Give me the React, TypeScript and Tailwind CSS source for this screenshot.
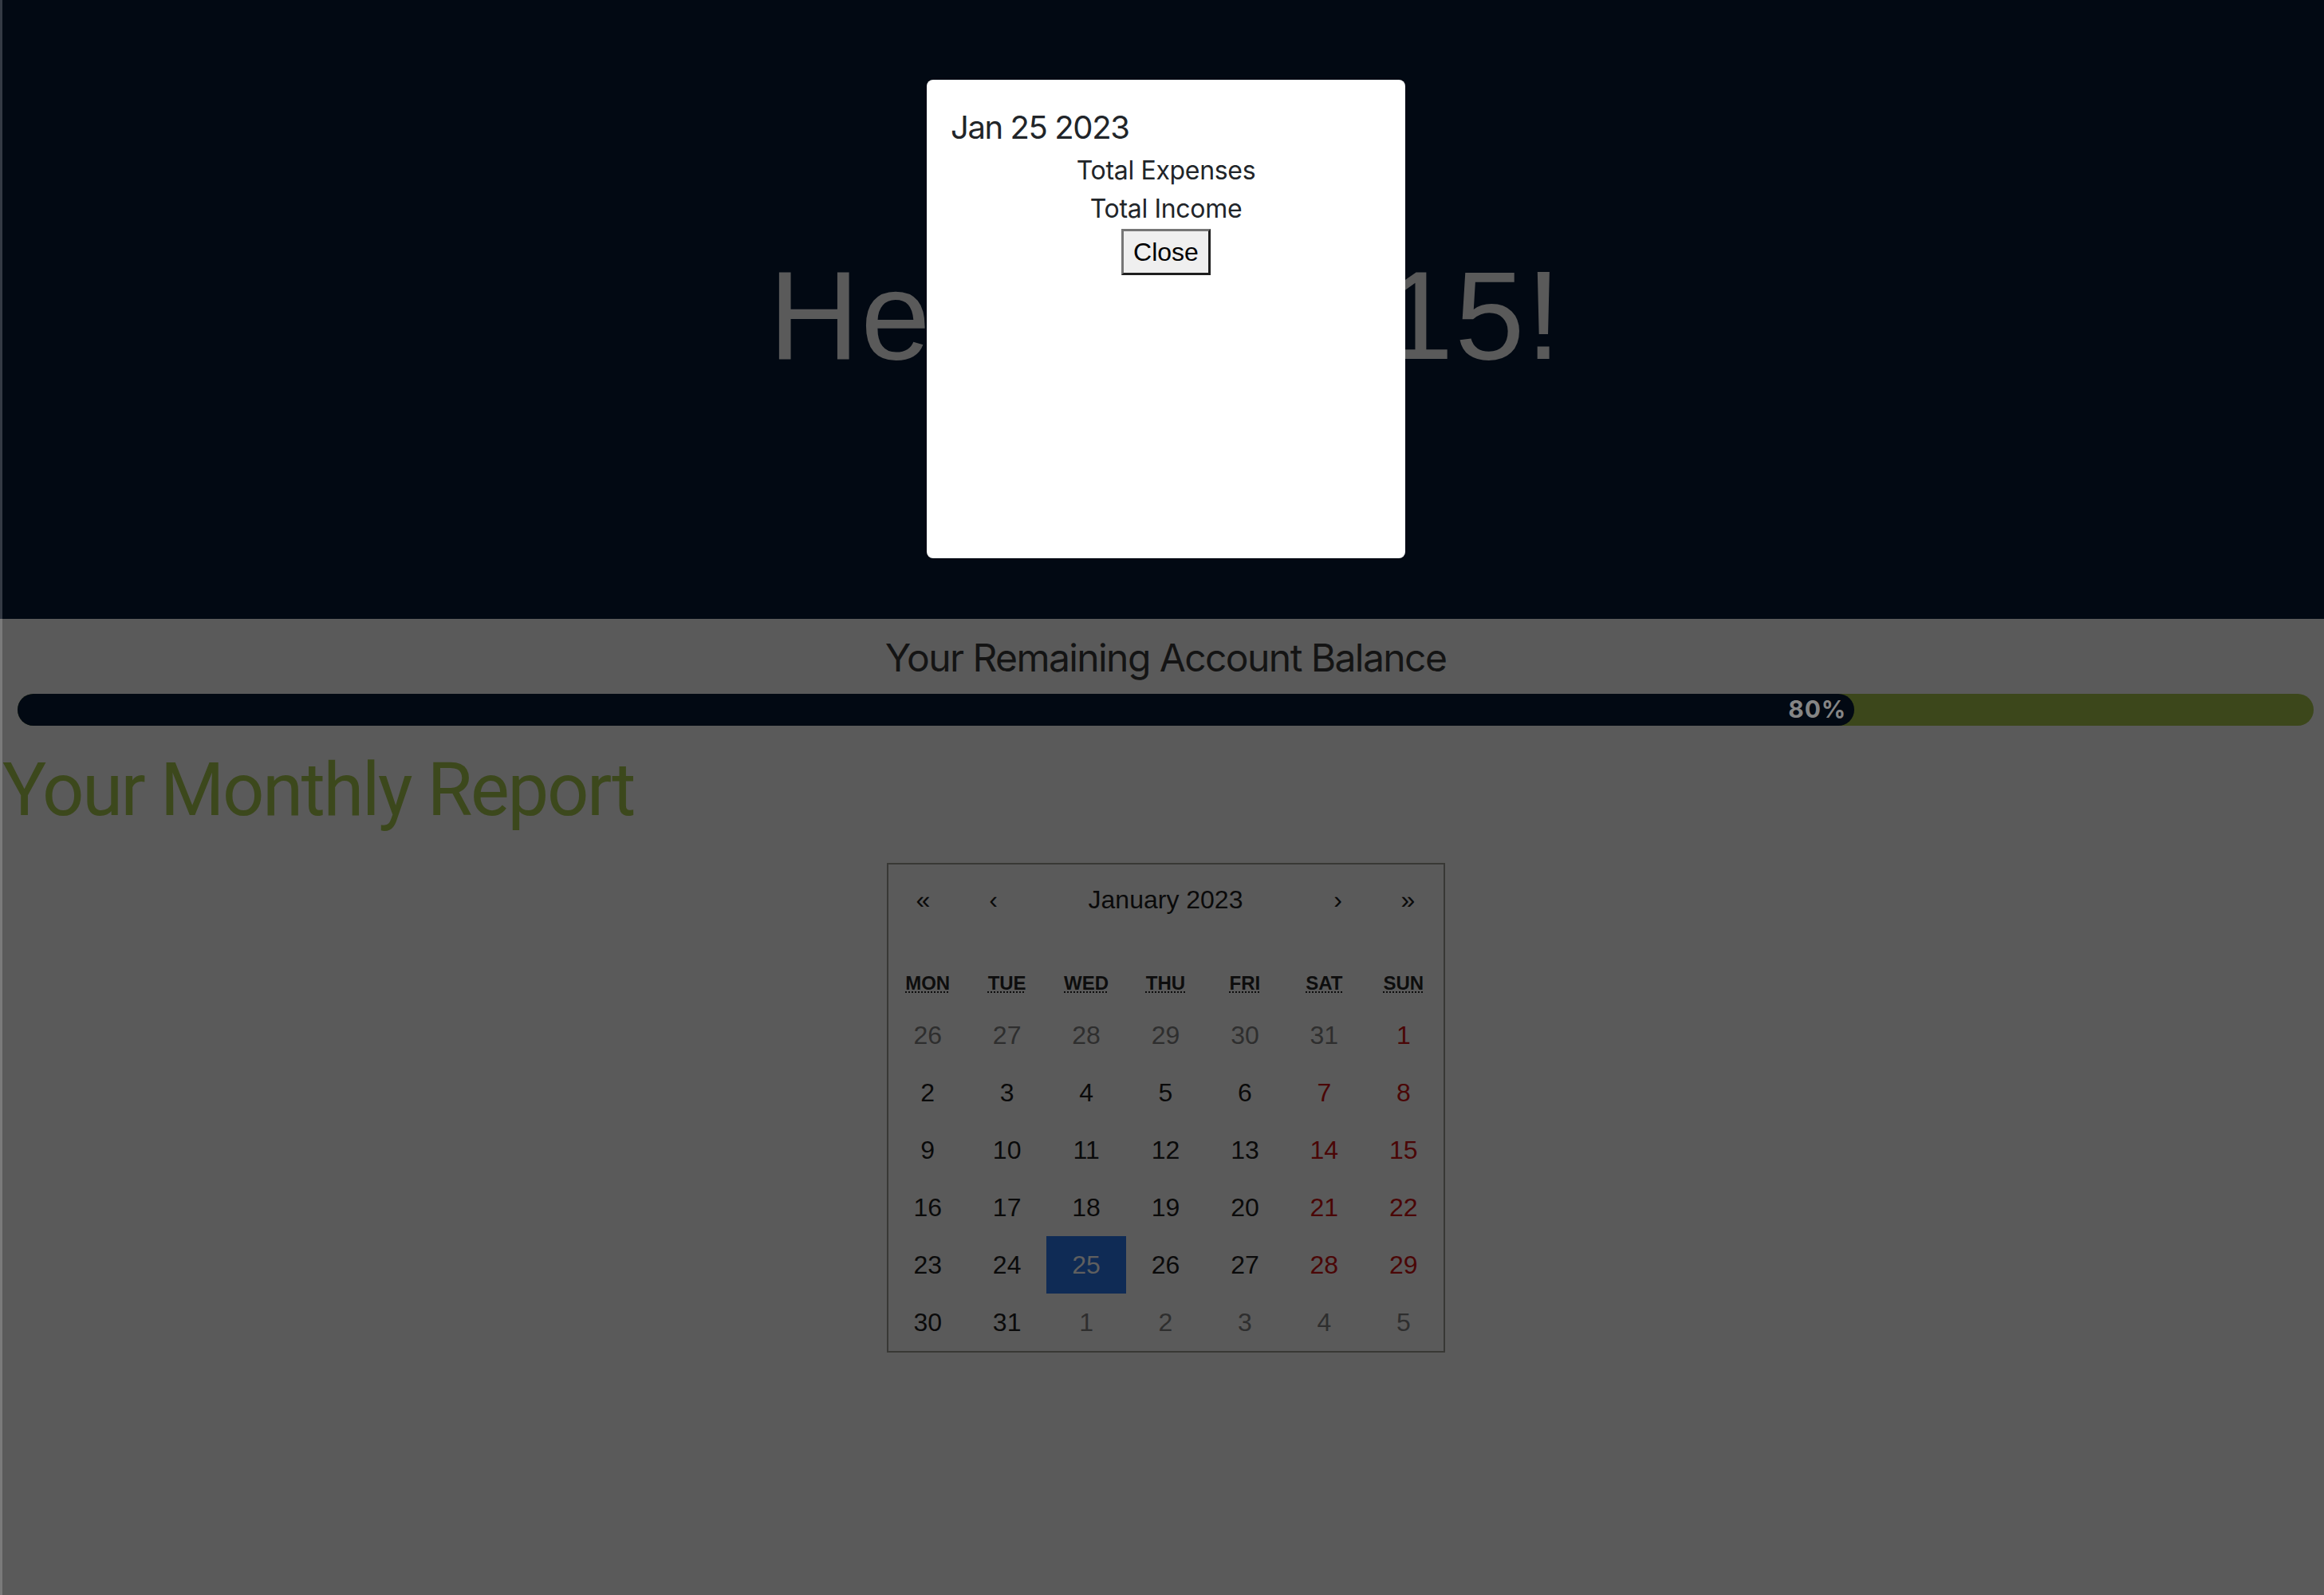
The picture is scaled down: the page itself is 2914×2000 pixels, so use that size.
import React from "react";

const weekdays = ["Mon", "Tue", "Wed", "Thu", "Fri", "Sat", "Sun"];

const weeks: number[][] = [
  [26, 27, 28, 29, 30, 31, 1],
  [2, 3, 4, 5, 6, 7, 8],
  [9, 10, 11, 12, 13, 14, 15],
  [16, 17, 18, 19, 20, 21, 22],
  [23, 24, 25, 26, 27, 28, 29],
  [30, 31, 1, 2, 3, 4, 5],
];

function isOtherMonth(row: number, day: number) {
  return (row === 0 && day > 20) || (row === 5 && day < 10);
}

function Calendar() {
  return (
    <div className="mx-auto mt-[36px] w-[700px] border-2 border-[#383835] font-['Liberation_Sans',Arial,sans-serif] text-[#0a0a0a]">
      {/* navigation */}
      <div className="mb-[32px] flex h-[88px]">
        <button className="min-w-[88px] text-[32px]">«</button>
        <button className="min-w-[88px] text-[32px]">‹</button>
        <button className="flex-1 text-[32px]">January 2023</button>
        <button className="min-w-[88px] text-[32px]">›</button>
        <button className="min-w-[88px] text-[32px]">»</button>
      </div>

      {/* weekdays */}
      <div className="grid grid-cols-7">
        {weekdays.map((d) => (
          <div
            key={d}
            className="p-[12px] text-center text-[24px] font-bold uppercase leading-[34px] text-[#0d0d0d]"
          >
            <abbr title={d} className="underline decoration-dotted decoration-[2px] underline-offset-[3px]">
              {d}
            </abbr>
          </div>
        ))}
      </div>

      {/* days */}
      <div className="grid grid-cols-7">
        {weeks.map((week, r) =>
          week.map((day, c) => {
            const other = isOtherMonth(r, day);
            const active = !other && day === 25;
            let color = "text-[#0a0a0a]";
            if (other) color = "text-[#2e2e2e]";
            else if (c >= 5) color = "text-[#4a0606]";
            if (active) color = "text-[#5f5f5f] bg-[#0f2b55]";
            return (
              <div
                key={`${r}-${c}`}
                className={`flex h-[72px] items-center justify-center text-[32px] ${color}`}
              >
                {day}
              </div>
            );
          })
        )}
      </div>
    </div>
  );
}

export default function App() {
  return (
    <div className="relative flex min-h-[2000px] w-full overflow-hidden bg-[#5a5a5a]">
      <div className="flex w-[2920px] shrink-0 flex-col">
        {/* header */}
        <div className="flex h-[776px] items-center justify-center border-l-[3px] border-[#343a44] bg-[#020913] pt-[14px]">
          <h1 className="font-['Liberation_Sans',Arial,sans-serif] text-[157px] leading-none tracking-[0.012em] text-[#5a5a5a]">
            Hello, user15!
          </h1>
        </div>

        {/* body */}
        <div className="flex flex-1 flex-col border-l-[3px] border-[#7a7a7a] pt-[20px]">
          <h4 className="mb-[16px] text-center font-['Inter',sans-serif] text-[48px] leading-[57.6px] tracking-[-0.033em] text-[#141414]">
            Your Remaining Account Balance
          </h4>

          <div className="mx-[19px] flex h-[40px] rounded-full bg-[#3c471b]">
            <div className="flex w-[80%] items-center justify-end rounded-full bg-[#020913] pr-[10px] font-['Inter',sans-serif] text-[30px] font-bold tracking-[0.03em] text-[#858585]">
              80%
            </div>
          </div>

          <h2 className="mt-[26px] font-['Roboto',sans-serif] text-[92px] leading-[1.2] tracking-[-0.025em] text-[#3c481c]">
            Your Monthly Report
          </h2>

          <Calendar />
        </div>
      </div>

      {/* date modal */}
      <div className="absolute left-[1162px] top-[100px] flex h-[600px] w-[600px] flex-col rounded-lg bg-white px-[30px] pt-[36px] font-['Inter',sans-serif] tracking-[-0.02em] text-[#212529]">
        <h5 className="text-[40px] leading-[48px] tracking-[-0.035em]">Jan 25 2023</h5>
        <div className="mt-[6px] flex flex-col items-center text-[32px] leading-[48px]">
          <p>Total Expenses</p>
          <p>Total Income</p>
          <button className="mt-[1px] h-[58px] border-[3px] border-b-[#1f1f1f] border-l-[#767676] border-r-[#1f1f1f] border-t-[#767676] bg-[#efefef] px-[12px] font-['Liberation_Sans',Arial,sans-serif] text-[32px] leading-none tracking-normal text-black">
            Close
          </button>
        </div>
      </div>
    </div>
  );
}
